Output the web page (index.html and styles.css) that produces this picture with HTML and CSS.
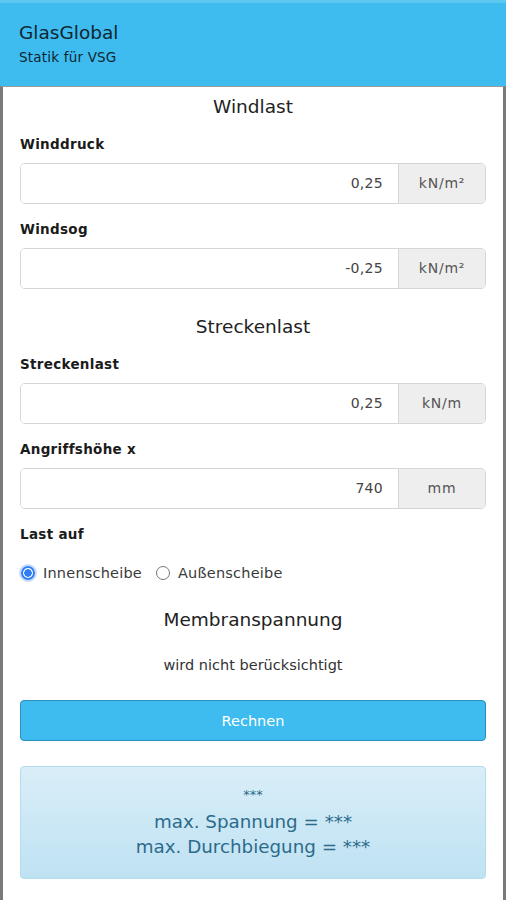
FILE: index.html
```html
<!DOCTYPE html>
<html lang="de">
<head>
<meta charset="utf-8">
<title>GlasGlobal</title>
<link rel="stylesheet" href="styles.css">
</head>
<body>
<header class="appbar">
  <div class="app-title">GlasGlobal</div>
  <div class="app-sub">Statik für VSG</div>
</header>
<main class="content">
  <h2 class="section-title first">Windlast</h2>
  <div class="field">
    <label class="field-label">Winddruck</label>
    <div class="input-group">
      <div class="input">0,25</div>
      <div class="addon">kN/m²</div>
    </div>
  </div>
  <div class="field">
    <label class="field-label">Windsog</label>
    <div class="input-group">
      <div class="input">-0,25</div>
      <div class="addon">kN/m²</div>
    </div>
  </div>

  <h2 class="section-title">Streckenlast</h2>
  <div class="field">
    <label class="field-label">Streckenlast</label>
    <div class="input-group">
      <div class="input">0,25</div>
      <div class="addon">kN/m</div>
    </div>
  </div>
  <div class="field">
    <label class="field-label">Angriffshöhe x</label>
    <div class="input-group">
      <div class="input">740</div>
      <div class="addon">mm</div>
    </div>
  </div>

  <div class="field">
    <label class="field-label">Last auf</label>
    <div class="radios">
      <span class="radio"><span class="dot checked"></span>Innenscheibe</span>
      <span class="radio"><span class="dot"></span>Außenscheibe</span>
    </div>
  </div>

  <h2 class="section-title membran">Membranspannung</h2>
  <p class="note">wird nicht berücksichtigt</p>

  <button class="btn">Rechnen</button>

  <div class="result">
    <div class="stars">***</div>
    <div class="res-line">max. Spannung = ***</div>
    <div class="res-line">max. Durchbiegung = ***</div>
  </div>
</main>
</body>
</html>
```
FILE: styles.css
```css
html, body {
  margin: 0;
  padding: 0;
  background: #fff;
}
body {
  font-family: "DejaVu Sans", "Open Sans", sans-serif;
  color: #222;
  width: 506px;
  height: 900px;
  overflow: hidden;
}
.appbar {
  background: #3ebcef;
  border-top: 3px solid #5cc8f2;
  height: 86px;
  box-sizing: border-box;
  padding: 18px 19px 0;
  color: #0f2631;
}
.app-title {
  font-size: 18.5px;
  line-height: 24px;
}
.app-sub {
  font-size: 13.5px;
  line-height: 20px;
  margin-top: 2px;
  letter-spacing: 0.2px;
}
.content {
  border-left: 3px solid #7a7a7a;
  border-right: 3px solid #7a7a7a;
  border-top: 1px solid #9a9a9a;
  padding: 0 17px 20px;
  height: 814px;
  box-sizing: border-box;
}
.section-title {
  font-weight: normal;
  font-size: 18.5px;
  line-height: 26px;
  text-align: center;
  color: #222;
  margin: 25px 0 0;
}
.section-title.first {
  margin-top: 7px;
}
.field {
  margin-top: 15px;
}
.section-title + .field {
  margin-top: 14px;
}
.field-label {
  display: block;
  font-size: 13.5px;
  font-weight: bold;
  line-height: 20px;
  letter-spacing: 0.3px;
  color: #1b1b1b;
  margin-bottom: 9px;
}
.input-group {
  display: flex;
  height: 41px;
  border: 1px solid #d6d6d6;
  border-radius: 5px;
  box-sizing: border-box;
  overflow: hidden;
}
.input {
  flex: 1;
  text-align: right;
  padding-right: 15px;
  font-size: 14px;
  line-height: 39px;
  letter-spacing: 0.3px;
  color: #444;
  background: #fff;
}
.addon {
  width: 86px;
  background: #eeeeee;
  border-left: 1px solid #d6d6d6;
  text-align: center;
  font-size: 14px;
  line-height: 39px;
  letter-spacing: 0.8px;
  color: #555;
}
.radios {
  display: flex;
  align-items: center;
  gap: 14px;
  font-size: 14.5px;
  letter-spacing: 0.2px;
  color: #3a3a3a;
  padding-top: 12px;
}
.radio {
  display: inline-flex;
  align-items: center;
  gap: 8px;
}
.dot {
  width: 14px;
  height: 14px;
  border: 1px solid #767676;
  border-radius: 50%;
  box-sizing: border-box;
  background: #fff;
}
.dot.checked {
  border: 2px solid #2f7ef5;
  background: radial-gradient(circle, #2f7ef5 0 3.5px, #fff 4px);
  box-shadow: 0 0 0 2px #c8dcfb;
  margin-left: 1px;
}
.section-title.membran {
  margin-top: 26px;
}
.note {
  text-align: center;
  font-size: 14.5px;
  color: #333;
  margin: 22px 0 0;
  line-height: 20px;
}
.btn {
  display: block;
  width: 100%;
  height: 41px;
  margin-top: 25px;
  background: #3ebcef;
  border: 1px solid #2a8fc0;
  border-radius: 4px;
  color: #fff;
  font-family: inherit;
  font-size: 14.5px;
}
.result {
  margin-top: 25px;
  border: 1px solid #b4dcef;
  border-radius: 4px;
  background: linear-gradient(#d9eef8, #bfe2f3);
  color: #2c6b8b;
  text-align: center;
  padding: 14px 0 19px;
}
.stars {
  font-size: 13px;
  line-height: 28px;
}
.res-line {
  font-size: 18.3px;
  line-height: 25px;
}
```
